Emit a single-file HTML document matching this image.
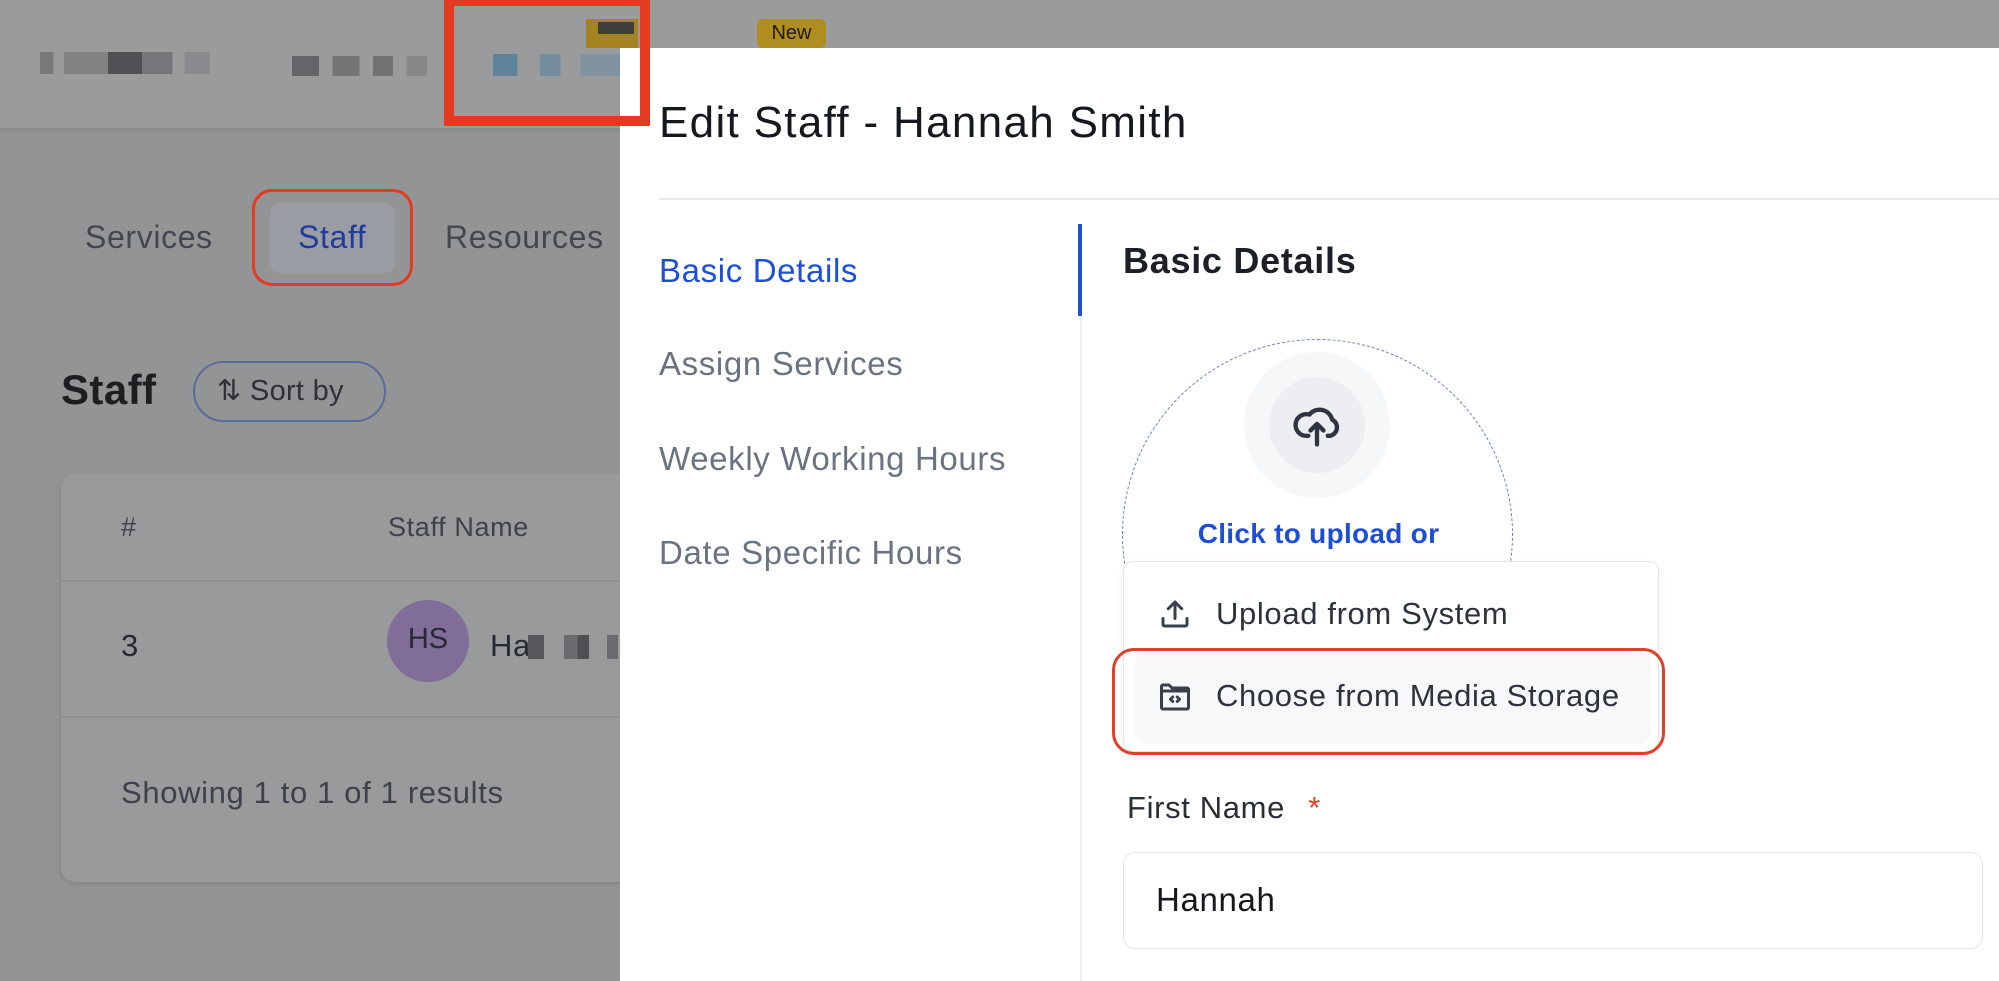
<!DOCTYPE html>
<html><head><meta charset="utf-8"><style>
*{margin:0;padding:0;box-sizing:border-box}
body{width:1999px;height:981px;overflow:hidden;background:#939495;font-family:"Liberation Sans",sans-serif;position:relative;letter-spacing:0.04em}
.a{position:absolute;white-space:nowrap}
</style></head><body>
<!-- top bar -->
<div class="a" style="left:0;top:0;width:1999px;height:128px;background:#9a9b9c;box-shadow:0 2px 4px rgba(0,0,0,.08)"></div>
<div class="a" style="left:40px;top:52px;width:170px;height:22px;background:linear-gradient(90deg,#6e6f72 0 8%,#9a9b9c 8% 14%,#7a7b7e 14% 40%,#3b3d42 40% 60%,#6c6d70 60% 78%,#9a9b9c 78% 85%,#85868a 85%);opacity:.8"></div>
<div class="a" style="left:292px;top:56px;width:135px;height:20px;background:linear-gradient(90deg,#55575b 0 20%,#9a9b9c 20% 30%,#6a6b6e 30% 50%,#9a9b9c 50% 60%,#66676a 60% 75%,#9a9b9c 75% 85%,#838487 85%);opacity:.8"></div>
<div class="a" style="left:493px;top:54px;width:135px;height:22px;background:linear-gradient(90deg,#4e7e9a 0 18%,#9a9b9c 18% 35%,#6a8aa0 35% 50%,#9a9b9c 50% 65%,#7a8fa0 65%);opacity:.8"></div>
<div class="a" style="left:757px;top:19px;width:69px;height:29px;background:#b08d1f;border-radius:6px;color:#1f1b10;font-size:20px;line-height:29px;text-align:center;letter-spacing:0">New</div>
<!-- tabs -->
<div class="a" style="left:85px;top:219px;font-size:32px;color:#43474e">Services</div>
<div class="a" style="left:252px;top:189px;width:161px;height:97px;border:3px solid #e43a22;border-radius:20px"></div>
<div class="a" style="left:270px;top:203px;width:125px;height:70px;background:#9a9ca4;border-radius:10px"></div>
<div class="a" style="left:298px;top:219px;font-size:32px;color:#213aa0">Staff</div>
<div class="a" style="left:445px;top:219px;font-size:32px;color:#43474e">Resources</div>
<div class="a" style="left:61px;top:366px;font-size:42px;font-weight:bold;color:#1c1e22;letter-spacing:0.01em">Staff</div>
<div class="a" style="left:193px;top:361px;width:193px;height:61px;border:2px solid #5a6a9a;border-radius:31px;font-size:29px;line-height:57px;color:#2e3138;padding-left:22px;letter-spacing:0.01em">⇅ Sort by</div>
<!-- card -->
<div class="a" style="left:61px;top:474px;width:620px;height:408px;background:#999a9b;border-radius:14px;box-shadow:0 2px 4px rgba(0,0,0,.12)"></div>
<div class="a" style="left:61px;top:580px;width:620px;height:2px;background:#8f9091"></div>
<div class="a" style="left:61px;top:716px;width:620px;height:2px;background:#8f9091"></div>
<div class="a" style="left:121px;top:512px;font-size:27px;color:#3d4149">#</div>
<div class="a" style="left:388px;top:512px;font-size:27px;color:#3d4149">Staff Name</div>
<div class="a" style="left:121px;top:628px;font-size:31px;color:#262a31">3</div>
<div class="a" style="left:387px;top:600px;width:82px;height:82px;border-radius:50%;background:#806e98;color:#2a2838;font-size:29px;line-height:78px;text-align:center;letter-spacing:0">HS</div>
<div class="a" style="left:490px;top:628px;font-size:31px;color:#262a31">Ha</div>
<div class="a" style="left:528px;top:635px;width:90px;height:24px;background:linear-gradient(90deg,#55575b 0 18%,#999a9b 18% 40%,#6a6b6e 40% 55%,#4d4f53 55% 68%,#999a9b 68% 88%,#6a6b6e 88%)"></div>
<div class="a" style="left:121px;top:775px;font-size:31px;color:#3d4149">Showing 1 to 1 of 1 results</div>
<!-- modal -->
<div class="a" style="left:620px;top:48px;width:1379px;height:933px;background:#fff"></div>
<!-- red box over modal -->
<div class="a" style="left:586px;top:19px;width:52px;height:29px;background:#a38420"></div>
<div class="a" style="left:598px;top:22px;width:36px;height:12px;background:#3f3f3a"></div>
<div class="a" style="left:444px;top:0;width:206px;height:126px;border:10px solid #e43a22;border-top-width:6px"></div>
<div class="a" style="left:659px;top:98px;font-size:44px;color:#15181d;letter-spacing:0.03em">Edit Staff - Hannah Smith</div>
<div class="a" style="left:659px;top:198px;width:1340px;height:2px;background:#e6e8eb"></div>
<div class="a" style="left:659px;top:252px;font-size:33px;color:#1d4fd6">Basic Details</div>
<div class="a" style="left:659px;top:345px;font-size:33px;color:#6b7280">Assign Services</div>
<div class="a" style="left:659px;top:440px;font-size:33px;color:#6b7280">Weekly Working Hours</div>
<div class="a" style="left:659px;top:534px;font-size:33px;color:#6b7280">Date Specific Hours</div>
<div class="a" style="left:1080px;top:224px;width:2px;height:757px;background:#eceef1"></div>
<div class="a" style="left:1078px;top:224px;width:4px;height:92px;background:#1d4fd6"></div>
<div class="a" style="left:1123px;top:240px;font-size:36px;font-weight:bold;color:#1c1f25;letter-spacing:0.02em">Basic Details</div>
<div class="a" style="left:1122px;top:339px;width:391px;height:391px;border:1.5px dashed #6a7fb0;border-radius:50%"></div>
<div class="a" style="left:1244px;top:352px;width:146px;height:146px;border-radius:50%;background:#f6f7f9"></div>
<div class="a" style="left:1269px;top:377px;width:96px;height:96px;border-radius:50%;background:#eceef1"></div>
<svg class="a" style="left:1291px;top:399px" width="52" height="52" viewBox="0 0 24 24" fill="none" stroke="#2f3540" stroke-width="2" stroke-linecap="round" stroke-linejoin="round"><path d="M8 17H7a5 5 0 1 1 1.5-9.8A6 6 0 0 1 19 9.5a4 4 0 0 1-1 7.5h-1"/><path d="M12 21v-9M9 14.5l3-3 3 3"/></svg>
<div class="a" style="left:1123px;top:518px;width:391px;text-align:center;font-size:28px;font-weight:bold;color:#1d4fd6;letter-spacing:0.01em">Click to upload or</div>
<div class="a" style="left:1123px;top:561px;width:536px;height:191px;background:#fff;border:1.5px solid #e3e5e8;border-radius:10px;box-shadow:0 4px 10px rgba(0,0,0,.06)"></div>
<svg class="a" style="left:1157px;top:596px" width="36" height="36" viewBox="0 0 24 24" fill="none" stroke="#3a404a" stroke-width="2" stroke-linecap="round" stroke-linejoin="round"><path d="M4 15v4a1 1 0 0 0 1 1h14a1 1 0 0 0 1-1v-4"/><path d="M12 15V4M7.5 8.5 12 4l4.5 4.5"/></svg>
<div class="a" style="left:1216px;top:596px;font-size:31px;color:#2e333b">Upload from System</div>
<div class="a" style="left:1135px;top:652px;width:516px;height:92px;background:#f6f8fa;border-radius:12px"></div>
<div class="a" style="left:1112px;top:648px;width:553px;height:107px;border:3px solid #e0402a;border-radius:22px"></div>
<svg class="a" style="left:1157px;top:679px" width="36" height="36" viewBox="0 0 24 24" fill="none" stroke="#3a404a" stroke-width="2" stroke-linecap="round" stroke-linejoin="round"><path d="M3 6V5a1 1 0 0 1 1-1h4l2 2h10a1 1 0 0 1 1 1v12a1 1 0 0 1-1 1H4a1 1 0 0 1-1-1z"/><path d="M3 8h18"/><path d="M10.5 12l-1.5 1.5 1.5 1.5M13.5 12l1.5 1.5-1.5 1.5"/></svg>
<div class="a" style="left:1216px;top:678px;font-size:31px;color:#2e333b">Choose from Media Storage</div>
<div class="a" style="left:1127px;top:790px;font-size:31px;color:#2a2e35">First Name <span style="color:#e0402a;margin-left:14px">*</span></div>
<div class="a" style="left:1123px;top:852px;width:860px;height:97px;border:1.5px solid #e3e5e8;border-radius:12px"></div>
<div class="a" style="left:1156px;top:881px;font-size:33px;color:#15181d">Hannah</div>
</body></html>
